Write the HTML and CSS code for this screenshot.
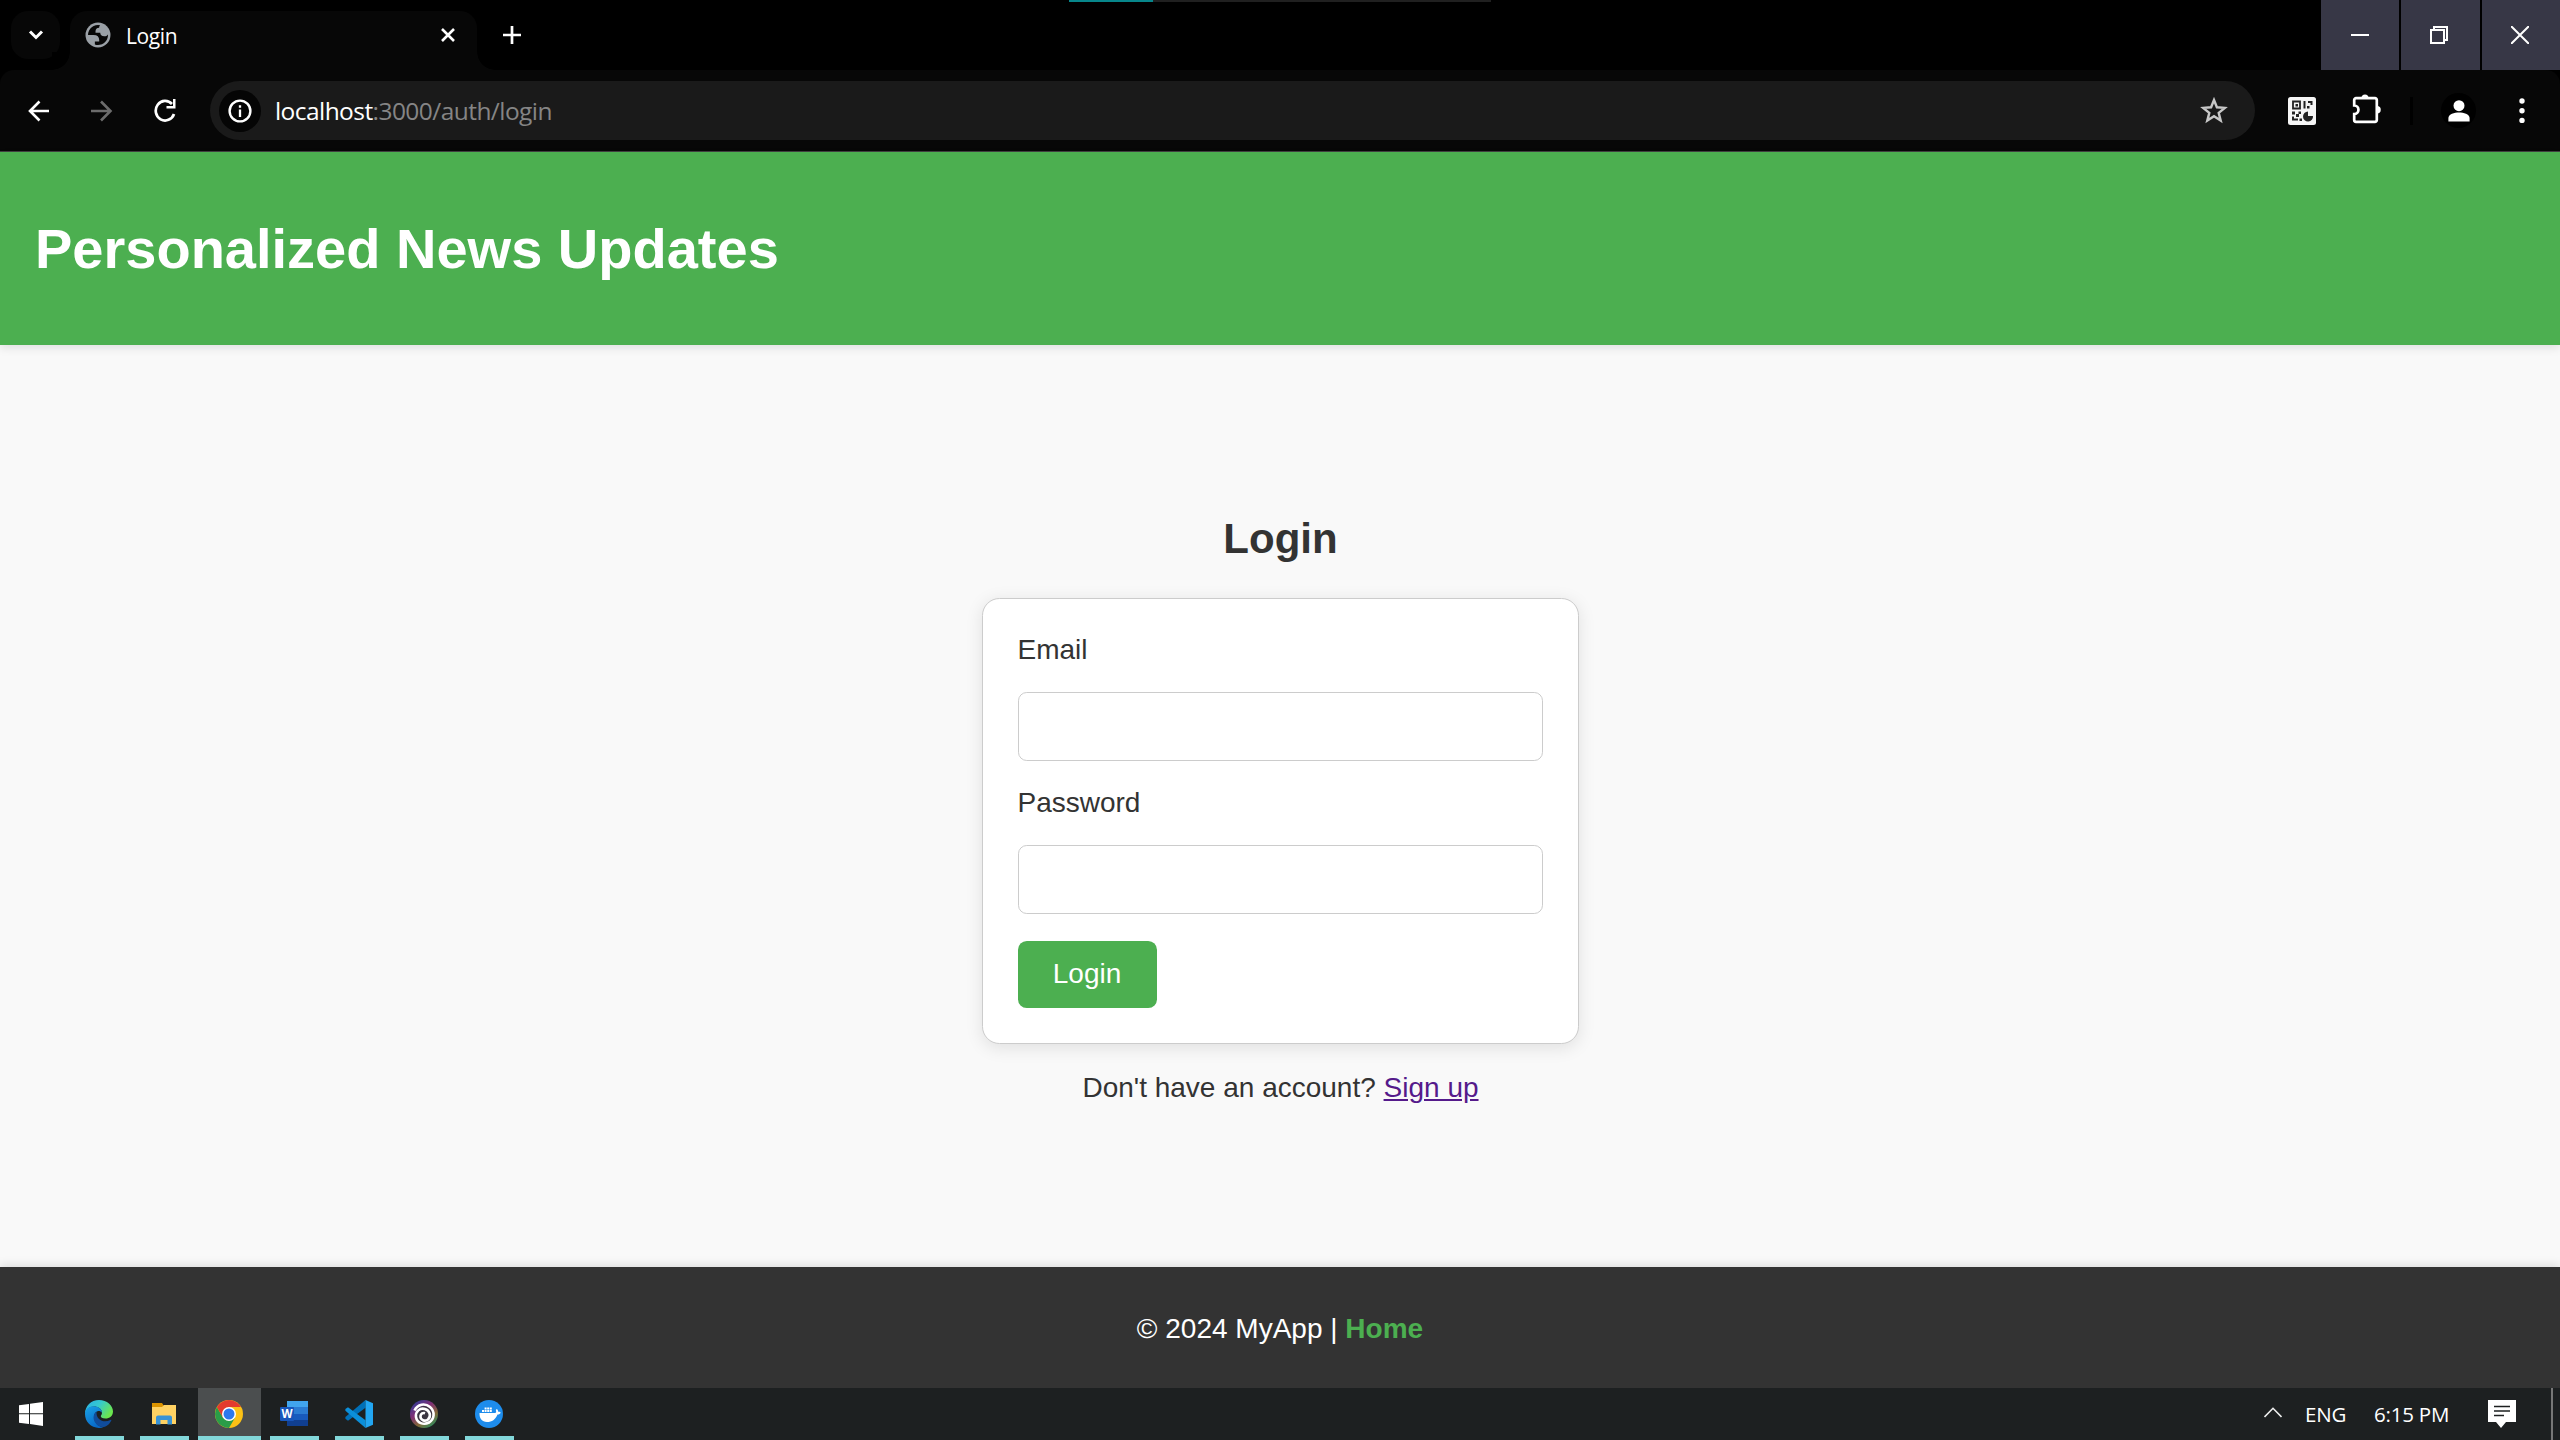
FILE: index.html
```html
<!DOCTYPE html>
<html lang="en">
<head>
<meta charset="utf-8">
<title>Login</title>
<link rel="stylesheet" href="styles.css">
</head>
<body>
<div class="screen">
  <div class="tabstrip">
    <button class="tab-search" aria-label="Search tabs"><svg width="16" height="12" viewBox="0 0 16 12"><path d="M2 2.500l6 6 6-6" fill="none" stroke="#fff" stroke-width="3"/></svg></button>
    <div class="tab">
      <svg class="globe" width="26" height="26" viewBox="1.600 1.600 20.800 20.800"><circle cx="12" cy="12" r="10" fill="#9aa0a6"/><path d="M4 12h4.400c3.407.022 4.922 1.730 4.543 5.127H9.488v2.470a8.004 8.004 0 0 0 10.498-8.083C19.327 12.504 18.332 13 17 13c-2.137 0-3.206-.916-3.206-2.750h-3.748c-.274-2.728.683-4.092 2.870-4.092 0-.975.327-1.597.811-1.970A8.004 8.004 0 0 0 4 12z" fill="#070707"/></svg>
      <span class="tab-title">Login</span>
      <svg class="tab-close" width="16" height="16" viewBox="0 0 16 16"><path d="M2 2l12 12M14 2L2 14" stroke="#fff" stroke-width="2.600"/></svg>
    </div>
    <svg class="new-tab" width="20" height="20" viewBox="0 0 20 20"><path d="M10 1v18M1 10h18" stroke="#fff" stroke-width="2.700"/></svg>
    <div class="progress"><div class="progress-value"></div></div>
    <div class="window-controls">
      <button aria-label="Minimize"><svg width="18" height="18" viewBox="0 0 18 18"><path d="M0 9h18" stroke="#fff" stroke-width="2"/></svg></button>
      <button aria-label="Restore"><svg width="18" height="18" viewBox="0 0 18 18"><path d="M1 4h13v13H1zM4 4V1h13v13h-3" fill="none" stroke="#fff" stroke-width="2"/></svg></button>
      <button aria-label="Close"><svg width="18" height="18" viewBox="0 0 18 18"><path d="M0 0l18 18M18 0L0 18" stroke="#fff" stroke-width="2"/></svg></button>
    </div>
  </div>

  <div class="toolbar">
    <svg class="nav-icon" width="22" height="22" viewBox="0 0 22 22"><path d="M21 11H2M11.500 1.500L2 11l9.500 9.500" fill="none" stroke="#fff" stroke-width="2.600"/></svg>
    <svg class="nav-icon" width="22" height="22" viewBox="0 0 22 22"><path d="M0 11h19.500M10 1.500l9.500 9.500-9.500 9.500" fill="none" stroke="#6c6c6c" stroke-width="2.600"/></svg>
    <svg class="nav-icon" width="22" height="24" viewBox="0 0 22 24"><path d="M20 15A9.400 9.800 0 1 1 18 5" fill="none" stroke="#fff" stroke-width="2.700"/><path d="M21.500 0v9.500h-9V7h6.500V0z" fill="#fff"/></svg>
    <div class="omnibox">
      <span class="site-info"><svg width="24" height="24" viewBox="0 0 24 24"><circle cx="12" cy="12" r="10.400" fill="none" stroke="#fff" stroke-width="2.400"/><path d="M12 10.500V18M12 6.200v2.500" stroke="#fff" stroke-width="2.300"/></svg></span>
      <span class="url"><span class="host">localhost</span>:3000/auth/login</span>
      <svg class="star" width="28" height="27" viewBox="0 0 28 27"><path d="M14 3l2.900 7.300 7.900.6-6.100 5 2 7.700-6.700-4.300-6.700 4.300 2-7.700-6.100-5 7.900-.6z" fill="none" stroke="#c8c8c8" stroke-width="2.400"/></svg>
    </div>
    <svg class="qr" width="28" height="28" viewBox="0 0 28 28"><rect width="28" height="28" rx="2.500" fill="#f5f5f5"/><path d="M5 4.500h7v7H5z" fill="none" stroke="#222" stroke-width="1.800"/><path d="M7.500 7h2.500v2.500H7.500zM15.500 4h2v7.500h-2zM20 4h4.500v4h-2V6H20zM19 9h2.500v2.500H19zM4 14.500h3v3H4zM8 17h3v3H8zM10.500 14.500h2.500v2.500h-2.500zM4 19.500h2v2h4v2H4zM11.500 21.500H14V24h-2.500z" fill="#222"/><path d="M20 14.500V19h5a5 5 0 1 1-5-4.500z" fill="#222"/></svg>
    <svg class="puzzle" width="29" height="30" viewBox="0 0 29 30"><path d="M4.200 4.200H23a1.800 1.800 0 0 1 1.800 1.800V26a1.800 1.800 0 0 1-1.800 1.800H4A1.800 1.800 0 0 1 2.200 26V20a4.200 4.200 0 0 0 0-8.500V6A1.800 1.800 0 0 1 4.200 4.200z" fill="none" stroke="#fff" stroke-width="2.700"/><path d="M9.500 4a3.500 3.500 0 0 1 7 0zM25 12a3.600 3.600 0 0 1 0 7.500z" fill="#fff"/></svg>
    <span class="separator"></span>
    <span class="avatar"><svg width="22" height="22" viewBox="0 0 22 22"><circle cx="11" cy="5.700" r="5.500" fill="#fff"/><path d="M.4 21.500V18c0-3.600 6-5.400 10.600-5.400S21.600 14.400 21.600 18v3.500z" fill="#fff"/></svg></span>
    <svg class="menu" width="6" height="26" viewBox="0 0 6 26"><circle cx="3" cy="3" r="2.700" fill="#fff"/><circle cx="3" cy="12.700" r="2.700" fill="#fff"/><circle cx="3" cy="22.400" r="2.700" fill="#fff"/></svg>
  </div>

  <header class="site-header"><h1>Personalized News Updates</h1></header>

  <main class="content">
    <h2>Login</h2>
    <form class="card">
      <label for="email">Email</label>
      <input id="email" type="email">
      <label for="password">Password</label>
      <input id="password" type="password">
      <button class="submit" type="button">Login</button>
    </form>
    <p class="signup">Don't have an account? <a href="#">Sign up</a></p>
  </main>

  <footer class="site-footer"><p>© 2024 MyApp | <a href="#">Home</a></p></footer>

  <div class="taskbar">
    <div class="start"><svg width="24" height="24" viewBox="0 0 24 24"><path d="M0 3.200l10-1.300v9.300H0zM11 1.700L24 0v11.200H11zM0 12.300h10v9.600L0 20.700zM11 12.300h13V24l-13-1.900z" fill="#fff"/></svg></div>
    <div class="app"><svg width="28" height="28" viewBox="0 0 28 28">
      <defs>
        <linearGradient id="edgeTop" x1="0" y1="0" x2="1" y2=".5"><stop offset="0" stop-color="#28aee8"/><stop offset=".5" stop-color="#35c9cf"/><stop offset="1" stop-color="#6be64f"/></linearGradient>
        <linearGradient id="edgeLeft" x1="0" y1="0" x2=".5" y2="1"><stop offset="0" stop-color="#1aa2e6"/><stop offset="1" stop-color="#0869c8"/></linearGradient>
      </defs>
      <path d="M0 14C0 6 6 0 14 0s14 5.500 14 11.500c0 4.500-3.500 7-7.500 7-3.500 0-4.700-1.300-4.700-2.300 0-.9 1.200-1.500 1.200-3.500C17 9 13 6.500 9 6.500 4 6.500 1 10 0 14z" fill="url(#edgeTop)"/>
      <path d="M0 14c0-5 4-7.800 8.700-7.800 5 0 8.300 3 8.300 6.500-1-1.500-3-2-4.500-1.500-3 1-4 4-3 8 1 4.500 4.500 7.800 9 8.100C8 30 0 23 0 14z" fill="url(#edgeLeft)"/>
      <path d="M11.700 11.600C8 14 7.500 19 10.500 23c3.500 5 11 6.500 15.700-2.300.4-.8-.2-1-.8-.7C18 23.500 10.500 19 11.700 11.600z" fill="#104c9b"/></svg></div>
    <div class="app"><svg width="28" height="28" viewBox="0 0 28 28"><path d="M2 3h10l2 3v5H2z" fill="#dc9400"/><path d="M2 7h10l2-2h12v19H2z" fill="#ffd263"/><path d="M6 24.500V17.500a2 2 0 0 1 2-2h12a2 2 0 0 1 2 2v7h-4.500V20h-7v4.500z" fill="#3993d5"/></svg></div>
    <div class="app active"><svg width="28" height="28" viewBox="0 0 28 28"><circle cx="14" cy="14" r="14" fill="#fbc116"/><path d="M1.900 7A14 14 0 0 0 14 28l6.100-10.500L14 14 7.900 17.500z" fill="#2a9d48"/><path d="M1.900 7A14 14 0 0 1 26.100 7H14L7.900 17.500z" fill="#e33b2e"/><circle cx="14" cy="14" r="7" fill="#fff"/><circle cx="14" cy="14" r="5.500" fill="#2b78ed"/></svg></div>
    <div class="app"><svg width="28" height="28" viewBox="0 0 28 28"><path d="M7 1h21v7H7z" fill="#41a5ee"/><path d="M7 7h21v7H7z" fill="#2b7cd3"/><path d="M7 14h21v6H7z" fill="#185abd"/><path d="M7 20h21v6H7z" fill="#103f91"/><rect y="7" width="14" height="14" rx="1" fill="#1856bb"/><text x="7" y="18" text-anchor="middle" class="word-letter">W</text></svg></div>
    <div class="app"><svg width="28" height="28" viewBox="0 0 28 28"><path d="M20.500 0v7.700L3 20.800.4 18.800V17z" fill="#0070b8"/><path d="M.4 10.800V9L3 7.200l17.500 13V28L.4 10.800z" fill="#0b8fda"/><path d="M20.500 0L28 3.200v21.600L20.500 28z" fill="#22a6f2"/></svg></div>
    <div class="app"><svg width="28" height="28" viewBox="0 0 28 28"><defs><linearGradient id="ubi" x1=".1" y1="0" x2=".8" y2="1"><stop offset="0" stop-color="#263d9b"/><stop offset=".4" stop-color="#813076"/><stop offset=".7" stop-color="#836837"/><stop offset="1" stop-color="#239064"/></linearGradient></defs><circle cx="14" cy="14" r="14" fill="url(#ubi)"/><circle cx="14" cy="14.500" r="8.500" fill="#3a3540"/><path d="M4.500 10.500C7.500 4 15 2.800 20 7c5.500 4.800 4.300 12.500-1 15.500-5.500 3-12 .5-13-5.500-.8-5.500 4-9.500 9-8 5 1.500 6.500 7.500 3 10.500-3 2.500-8 .5-7.500-3.500.3-2.300 2.500-3.500 4.500-2.800" fill="none" stroke="#fff" stroke-width="2.600"/></svg></div>
    <div class="app"><svg width="28" height="28" viewBox="0 0 28 28"><circle cx="14" cy="14" r="14" fill="#1d8cec"/><path d="M4.500 13H20c1.200 0 1.500-1.200.8-3l1-.9c1 .8 1.300 1.700 1.400 2.700 1 0 1.900.1 2.500.6-.5 1.500-1.600 2-3.200 2.100C20.500 19.500 17 22 12 22c-5 0-7.700-3.500-7.500-9z" fill="#fff"/><path d="M7 10h2v2H7zM9.600 10h2v2h-2zM12.200 10h2v2h-2zM14.800 10h2v2h-2zM9.600 7.500h2v2h-2zM12.200 7.500h2v2h-2zM14.800 7.500h2v2h-2z" fill="#fff"/></svg></div>
    <div class="tray">
      <svg class="tray-up" width="18" height="11" viewBox="0 0 18 11"><path d="M.5 10L9 1.300 17.500 10" fill="none" stroke="#eee" stroke-width="1.600"/></svg>
      <span class="lang">ENG</span>
      <span class="clock">6:15 PM</span>
      <svg class="notice" width="28" height="28" viewBox="0 0 28 28"><path d="M0 0h28v22H18l-5 6-5-6H0z" fill="#fff"/><path d="M6 6.500h16M6 11h16M6 15.500h10" stroke="#1d2021" stroke-width="1.500"/></svg>
      <span class="peek"></span>
    </div>
  </div>
</div>
</body>
</html>
```
FILE: styles.css
```css
* { box-sizing: border-box; }
body { margin: 0; background: #000; }
.screen { width: 2560px; height: 1440px; overflow: hidden; display: flex; flex-direction: column; font-family: "Liberation Sans", Arial, sans-serif; }
svg { display: block; flex: none; }
button { border: 0; padding: 0; font: inherit; }

.tabstrip { position: relative; flex: none; height: 70px; display: flex; background: #000; font-family: "Open Sans", "Noto Sans", sans-serif; }
.tab-search { width: 49px; height: 48px; margin: 11px 10px 0 11px; border-radius: 17px; background: #070707; display: flex; align-items: center; justify-content: center; }
.tab { position: relative; width: 407px; height: 59px; margin-top: 11px; padding: 0 21px 11px 15px; display: flex; align-items: center; background: #070707; border-radius: 17px 17px 0 0; }
.tab::before, .tab::after { content: ""; position: absolute; bottom: 0; width: 18px; height: 18px; }
.tab::before { left: -18px; background: radial-gradient(circle at 0 0, #000 17.500px, #070707 18px); }
.tab::after { right: -18px; background: radial-gradient(circle at 100% 0, #000 17.500px, #070707 18px); }
.tab-title { margin-left: 15px; flex: 1; font-size: 21px; line-height: 28px; letter-spacing: -0.400px; color: #fff; padding-top: 2px; }
.new-tab { margin: 25px 0 0 25px; }
.progress { position: absolute; left: 1069px; top: 0; width: 422px; height: 2px; background: #202020; }
.progress-value { width: 84px; height: 2px; background: #07868b; }
.window-controls { margin-left: auto; display: grid; grid-template-columns: 78px 79px 78px; gap: 2px; }
.window-controls button { display: flex; align-items: center; justify-content: center; background: #373746; }
.window-controls button + button { padding-right: 3px; }
.window-controls button:last-child { padding-right: 2px; }

.toolbar { flex: none; height: 82px; display: flex; align-items: center; padding: 0 35px 0 28px; background: #070707; border-bottom: 1px solid #404040; border-radius: 14px 14px 0 0; }
.nav-icon { margin-right: 41px; }
.nav-icon + .nav-icon + .nav-icon { margin-right: 34px; }
.omnibox { width: 2045px; height: 59px; border-radius: 30px; background: #1a1a1a; display: flex; align-items: center; padding: 0 27px 0 9px; font-family: "Open Sans", "Noto Sans", sans-serif; }
.site-info { width: 42px; height: 42px; border-radius: 50%; background: #050505; display: flex; align-items: center; justify-content: center; }
.url { margin-left: 14px; flex: 1; font-size: 24.500px; letter-spacing: -0.560px; color: #858585; }
.host { color: #fff; }
.qr { margin-left: 33px; }
.puzzle { margin: -3px 0 0 36px; }
.separator { width: 3px; height: 28px; margin-left: 29px; background: #000; }
.avatar { width: 35px; height: 35px; margin-left: 28px; border-radius: 50%; background: #000; display: flex; align-items: center; justify-content: center; }
.menu { margin-left: auto; }

.site-header { position: relative; flex: none; height: 193px; padding: 0 35px; display: flex; align-items: center; background: #4caf50; box-shadow: 0 3.500px 8.750px rgba(0,0,0,.1); }
.site-header h1 { margin: 0; font-size: 56px; line-height: 90px; color: #fff; }

.content { flex: 1; display: flex; flex-direction: column; align-items: center; background: #f9f9f9; color: #333; font-size: 28px; }
.content h2 { margin: 160px 0 26px; padding-left: 1px; font-size: 42px; line-height: 67px; }
.card { width: 597px; height: 446px; padding: 28px 35px 0; display: flex; flex-direction: column; background: #fff; border: 1px solid #ccc; border-radius: 17.500px; box-shadow: 0 3.500px 17.500px rgba(0,0,0,.1); }
.card label { line-height: 45px; }
.card input { height: 69px; margin: 20px 0 19px; border: 1px solid #ccc; border-radius: 8.750px; background: #fff; }
.submit { width: 139px; height: 67px; margin-top: 8px; padding-bottom: 2px; border-radius: 8.750px; background: #4caf50; color: #fff; line-height: 64px; }
.signup { margin: 21px 0 0; padding-left: 1px; line-height: 45px; }
.signup a { color: #551a8b; }

.site-footer { position: relative; flex: none; height: 121px; background: #333; color: #fff; font-size: 28px; text-align: center; box-shadow: 0 -3.500px 8.750px rgba(0,0,0,.1); }
.site-footer p { margin: 39px 0 0; line-height: 45px; }
.site-footer a { color: #4caf50; font-weight: bold; text-decoration: none; }

.taskbar { position: relative; flex: none; height: 52px; display: flex; background: #1d2021; }
.start { width: 67px; padding: 14px 0 0 19px; }
.app { width: 65px; display: flex; flex-direction: column; align-items: center; padding-top: 12px; }
.app svg { margin-right: 1px; }
.app::after { content: ""; width: 49px; height: 4px; margin-top: 8px; background: #82d7da; }
.app.active { width: 63px; margin: 0 1px; background: #4b4e4f; }
.app.active::after { width: 63px; }
.word-letter { font: bold 11.500px "Open Sans", sans-serif; fill: #fff; }
.tray { margin-left: auto; display: flex; align-items: center; color: #fff; font: 20.500px "Open Sans", "Noto Sans", sans-serif; letter-spacing: -0.200px; }
.tray-up { margin: -3px 23px 0 0; }
.lang { width: 69px; }
.clock { width: 114px; }
.notice { margin-right: 35px; }
.peek { width: 2px; height: 52px; margin-right: 7px; background: #777; }
```
